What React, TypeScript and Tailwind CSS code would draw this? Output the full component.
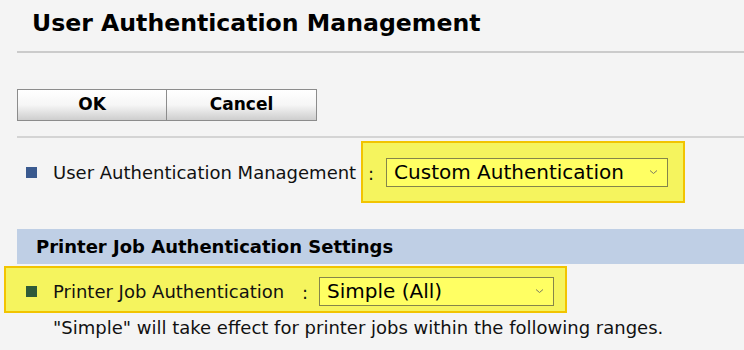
const font = "font-['DejaVu_Sans',Verdana,sans-serif]";

function Chevron() {
  return (
    <svg width="9" height="6" viewBox="0 0 9 6" className="shrink-0" aria-hidden="true">
      <path d="M1 1.5 L4.5 4.5 L8 1.5" fill="none" stroke="#7a7a60" strokeWidth="1" />
    </svg>
  );
}

function Select({ value, width }: { value: string; width: string }) {
  return (
    <div
      className={`flex h-[29px] items-center justify-between border border-[#85854a] bg-[#ffff63] pl-[7px] pr-[9px] text-[20px] leading-[27px] text-black ${width}`}
    >
      <span>{value}</span>
      <Chevron />
    </div>
  );
}

export default function App() {
  return (
    <div className={`h-[350px] w-[744px] overflow-hidden bg-[#f4f4f4] text-[#111] ${font}`}>
      <h1 className="h-[51px] pl-[32px] pt-[8px] text-[23.6px] font-bold leading-[30px] text-black">
        User Authentication Management
      </h1>
      <div className="ml-[17px] h-[2px] bg-[#cbcbcb]" />

      <div className="ml-[17px] mt-[36px] flex h-[32px] w-[300px]">
        {["OK", "Cancel"].map((label, i) => (
          <button
            key={label}
            className={`h-full w-[150px] border border-[#8c8c8c] bg-linear-to-b from-white via-[#f6f6f6] to-[#cecece] text-[17px] font-bold text-black ${
              i === 1 ? "border-l-0" : ""
            }`}
          >
            {label}
          </button>
        ))}
      </div>
      <div className="ml-[17px] mt-[15px] h-[2px] bg-[#d4d4d4]" />

      <div className="mt-[3px] flex items-center">
        <span className="ml-[26px] h-[11px] w-[11px] bg-[#3a5a8e]" />
        <span className="ml-[16px] w-[308px] pt-[2px] text-[18px] leading-[24px]">User Authentication Management</span>
        <div className="flex h-[62px] w-[324px] items-center border-2 border-[#f2c400] bg-[#f5f45e] pl-[5px]">
          <span className="pt-[2px] text-[18px]">:</span>
          <div className="ml-[12px]">
            <Select value="Custom Authentication" width="w-[282px]" />
          </div>
        </div>
      </div>

      <div className="ml-[17px] mt-[26px] h-[35px] bg-[#bfcfe5] pl-[19px] text-[18px] font-bold leading-[35px] text-black">
        Printer Job Authentication Settings
      </div>

      <div className="ml-[4px] mt-[2px] flex h-[47px] w-[563px] items-center border-2 border-[#f2c400] bg-[#f5f45e] pt-[3px]">
        <span className="ml-[20px] h-[11px] w-[11px] bg-[#2f5a3a]" />
        <span className="ml-[16px] w-[249px] pt-[2px] text-[18px] leading-[24px]">Printer Job Authentication</span>
        <span className="pt-[2px] text-[18px]">:</span>
        <div className="ml-[11px]">
          <Select value="Simple (All)" width="w-[235px]" />
        </div>
      </div>

      <p className="ml-[53px] mt-[4px] text-[18px] leading-[22px]">
        "Simple" will take effect for printer jobs within the following ranges.
      </p>
    </div>
  );
}
